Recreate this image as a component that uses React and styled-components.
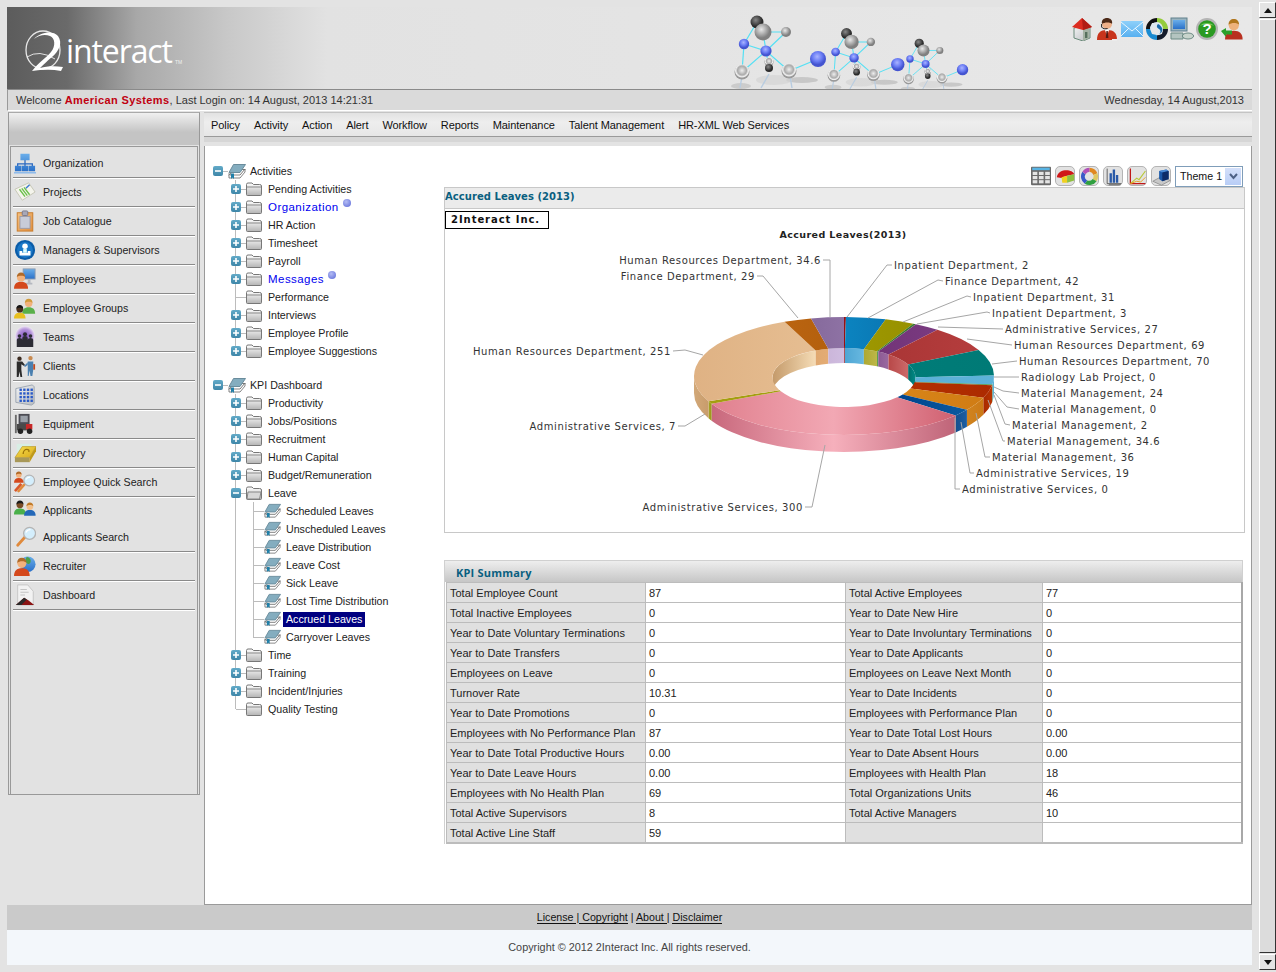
import React from 'react';
import styled, { createGlobalStyle, css } from 'styled-components';

const GlobalStyle = createGlobalStyle`
  html, body {
    margin: 0;
    padding: 0;
    height: 972px;
    overflow: hidden;
    background: #e3e3e3;
    font-family: "Liberation Sans", Arial, sans-serif;
    font-size: 11px;
    color: #222;
  }
`;

/* ---------- data ---------- */

const MENU = ['Policy', 'Activity', 'Action', 'Alert', 'Workflow', 'Reports', 'Maintenance', 'Talent Management', 'HR-XML Web Services'];

const KPI = [
  ['Total Employee Count', '87', 'Total Active Employees', '77'],
  ['Total Inactive Employees', '0', 'Year to Date New Hire', '0'],
  ['Year to Date Voluntary Terminations', '0', 'Year to Date Involuntary Terminations', '0'],
  ['Year to Date Transfers', '0', 'Year to Date Applicants', '0'],
  ['Employees on Leave', '0', 'Employees on Leave Next Month', '0'],
  ['Turnover Rate', '10.31', 'Year to Date Incidents', '0'],
  ['Year to Date Promotions', '0', 'Employees with Performance Plan', '0'],
  ['Employees with No Performance Plan', '87', 'Year to Date Total Lost Hours', '0.00'],
  ['Year to Date Total Productive Hours', '0.00', 'Year to Date Absent Hours', '0.00'],
  ['Year to Date Leave Hours', '0.00', 'Employees with Health Plan', '18'],
  ['Employees with No Health Plan', '69', 'Total Organizations Units', '46'],
  ['Total Active Supervisors', '8', 'Total Active Managers', '10'],
  ['Total Active Line Staff', '59', '', ''],
];

const ACTIVITIES = [
  { label: 'Pending Activities', plus: true },
  { label: 'Organization', plus: true, alert: true },
  { label: 'HR Action', plus: true },
  { label: 'Timesheet', plus: true },
  { label: 'Payroll', plus: true },
  { label: 'Messages', plus: true, alert: true },
  { label: 'Performance' },
  { label: 'Interviews', plus: true },
  { label: 'Employee Profile', plus: true },
  { label: 'Employee Suggestions', plus: true },
];

const KPI_TREE = [
  { label: 'Productivity', plus: true },
  { label: 'Jobs/Positions', plus: true },
  { label: 'Recruitment', plus: true },
  { label: 'Human Capital', plus: true },
  { label: 'Budget/Remuneration', plus: true },
  {
    label: 'Leave',
    open: true,
    leaves: ['Scheduled Leaves', 'Unscheduled Leaves', 'Leave Distribution', 'Leave Cost', 'Sick Leave', 'Lost Time Distribution', 'Accrued Leaves', 'Carryover Leaves'],
  },
  { label: 'Time', plus: true },
  { label: 'Training', plus: true },
  { label: 'Incident/Injuries', plus: true },
  { label: 'Quality Testing' },
];

// angles follow directly from the values, clockwise from the top
const SLICES = [
  { value: 2, top: ['#8c0c0c', '#a01010'], wall: ['#b04040', '#b04040'] },
  { value: 42, top: ['#0a78b4', '#0b84c0'], wall: ['#4ea6d4', '#68b8e0'] },
  { value: 31, top: ['#979100', '#9d9700'], wall: ['#aea832', '#bdb748'] },
  { value: 3, top: ['#3c7a30', '#3c7a30'], wall: ['#5a9a50', '#5a9a50'] },
  { value: 27, top: ['#7a3a80', '#723478'], wall: ['#8c5a94', '#9a6aa0'] },
  { value: 69, top: ['#b53d3d', '#aa3636'], wall: ['#b84848', '#cc6a6a'] },
  { value: 70, top: ['#007a76', '#007c78'], wall: ['#006e6a', '#008a86'] },
  { value: 24, top: ['#5cb2d8', '#5cb0d6'], wall: ['#5cb2d8', '#5cb2d8'] },
  { value: 2, top: ['#3c8a30', '#3c8a30'], wall: ['#3c8a30', '#3c8a30'] },
  { value: 34.6, top: ['#ac2a00', '#b23000'], wall: ['#b83400', '#a82a00'] },
  { value: 36, top: ['#d07c14', '#d88418'], wall: ['#cc7a16', '#d08420'] },
  { value: 19, top: ['#0a5aa0', '#00448c'], wall: ['#1c5ea2', '#14508e'] },
  { value: 300, top: ['#d06070', '#f2a8b4', '#e0808e'], wall: ['#bf6478', '#f6b0bc', '#c8687c'] },
  { value: 7, top: ['#a49e10', '#a49e10'], wall: ['#9a9618', '#a8a428'] },
  { value: 251, top: ['#e6be92', '#dfb284'], wall: ['#c89c6c', '#d2a878'], inner: ['#c49a6a', '#f5dcb6'] },
  { value: 29, top: ['#b4600e', '#ba6410'], wall: ['#e0a870', '#e4ac74'] },
  { value: 34.6, top: ['#8e72a4', '#866a9c'], wall: ['#cbb6da', '#d0bde0'] },
];

const LABELS = [
  { text: 'Inpatient Department, 2', x: 894, y: 265, line: '892,265 887,265 847,317' },
  { text: 'Finance Department, 42', x: 945, y: 281, line: '943,281 938,280 868,318' },
  { text: 'Inpatient Department, 31', x: 973, y: 297, line: '971,297 967,296 903,322' },
  { text: 'Inpatient Department, 3', x: 992, y: 313, line: '990,313 987,312 917,324' },
  { text: 'Administrative Services, 27', x: 1005, y: 329, line: '1003,329 938,327' },
  { text: 'Human Resources Department, 69', x: 1014, y: 345, line: '1012,345 967,339' },
  { text: 'Human Resources Department, 70', x: 1019, y: 361, line: '1017,361 992,364' },
  { text: 'Radiology Lab Project, 0', x: 1021, y: 377, line: '1019,377 994,377' },
  { text: 'Material Management, 24', x: 1021, y: 393, line: '1019,393 1003,391 994,387' },
  { text: 'Material Management, 0', x: 1021, y: 409, line: '1019,409 1007,407 994,392' },
  { text: 'Material Management, 2', x: 1012, y: 425, line: '1010,425 1005,424 994,395' },
  { text: 'Material Management, 34.6', x: 1007, y: 441, line: '1005,441 1003,441 988,400' },
  { text: 'Material Management, 36', x: 992, y: 457, line: '990,457 985,457 976,413' },
  { text: 'Administrative Services, 19', x: 976, y: 473, line: '974,473 970,473 961,422' },
  { text: 'Administrative Services, 0', x: 962, y: 489, line: '960,489 955,489 955,418' },
  { text: 'Human Resources Department, 34.6', x: 821, y: 260, end: true, line: '823,260 830,260 830,317' },
  { text: 'Finance Department, 29', x: 755, y: 276, end: true, line: '757,276 763,276 798,318' },
  { text: 'Human Resources Department, 251', x: 671, y: 351, end: true, line: '673,351 685,350 703,355' },
  { text: 'Administrative Services, 7', x: 676, y: 426, end: true, line: '678,426 685,426 705,414' },
  { text: 'Administrative Services, 300', x: 803, y: 507, end: true, line: '805,507 812,507 825,445' },
];

/* ---------- small drawings ---------- */

const Person = ({ x = 0, y = 0, s = 1, skin = '#f2b27c', shirt = '#d4481c', hair = '#b06a28' }) => (
  <g transform={`translate(${x} ${y}) scale(${s})`}>
    <path d="M0 22c0-6 3-9 9-9s9 3 9 9z" fill={shirt} />
    <circle cx="9" cy="7.5" r="5.2" fill={skin} />
    <path d="M3.6 7c0-4 2.4-6 5.4-6s5.4 2 5.4 6c-2-2.4-8-2.4-10.8 0z" fill={hair} />
  </g>
);

const Lens = ({ x = 0, y = 0, s = 1 }) => (
  <g transform={`translate(${x} ${y}) scale(${s})`}>
    <path d="M9 11L1 20" stroke="#e08a3c" strokeWidth="3" strokeLinecap="round" />
    <circle cx="14" cy="7" r="6.5" fill="#d4eefc" stroke="#b4b4b4" strokeWidth="1.4" />
    <path d="M10 6c1-2 3-3 5-3" stroke="#fff" strokeWidth="1.4" fill="none" />
  </g>
);

const Glyph = styled.svg`
  display: block;
  flex: none;
  width: ${(p) => p.$size || 22}px;
  height: ${(p) => p.$size || 22}px;
`;

const Icon = ({ size, children }) => (
  <Glyph $size={size} viewBox="0 0 24 24">
    {children}
  </Glyph>
);

const OrgIcon = () => (
  <Icon>
    <path d="M12 8v5M4 16v-3h16v3M12 13v3" stroke="#2a68c0" strokeWidth="1.4" fill="none" />
    <path d="M7 2h10v7H7zM1 15h7v6H1zM8.5 15h7v6h-7zM16 15h7v6h-7z" fill="url(#gBlue)" />
    <path d="M0 22h24v1.4H0z" fill="#7fb4ec" />
  </Icon>
);
const ProjectIcon = () => (
  <Icon>
    <path d="M1 9l15-7 7 10-14 9z" fill="#f4f4ec" stroke="#c4c4b4" />
    <path d="M6 9l6 8M8.5 8l6 8M11 7l6 8" stroke="#6cc04a" strokeWidth="1.5" />
    <path d="M13 8l4-4" stroke="#3a7ad0" strokeWidth="1.5" />
  </Icon>
);
const CatalogueIcon = () => (
  <Icon>
    <rect x="3.5" y="3" width="17" height="20" fill="url(#gOrange)" stroke="#c87a28" />
    <rect x="6.5" y="7" width="11" height="13" fill="#c8ccd8" stroke="#9a9aa8" />
    <rect x="9" y="1" width="6" height="5" rx="1" fill="#a8a8b8" stroke="#78788a" />
  </Icon>
);
const ManagerIcon = () => (
  <Icon>
    <circle cx="12" cy="12" r="11" fill="#0a5ca8" />
    <circle cx="12" cy="12" r="8.6" fill="#1a78c8" />
    <circle cx="12" cy="8" r="3" fill="#fff" />
    <path d="M6 13v5h12v-5h-3v2H9v-2z" fill="#fff" />
    <path d="M10 11h4v4h-4z" fill="#dff" />
  </Icon>
);
const EmployeeIcon = () => (
  <Icon>
    <rect x="10" y="1" width="13" height="11" fill="url(#gBlue)" stroke="#8a9ab0" />
    <path d="M15 12h3v4h2v2h-7v-2h2z" fill="#b4b8c0" />
    <Person x={0} y={4} s={0.85} />
  </Icon>
);
const GroupIcon = () => (
  <Icon>
    <Person x={9} y={1} s={0.78} skin="#f2b27c" shirt="#5ab04a" hair="#d09a3a" />
    <Person x={0} y={8} s={0.7} skin="#4a3020" shirt="#e8c020" hair="#151515" />
  </Icon>
);
const TeamIcon = () => (
  <Icon>
    <circle cx="12" cy="11" r="11" fill="url(#gHalo)" />
    <g fill="#2c2c34">
      <circle cx="6" cy="11" r="2" />
      <circle cx="12" cy="9" r="2.2" />
      <circle cx="18" cy="11" r="2" />
      <path d="M3 23v-8q0-2 3-2t3 2v8zM9 23V13q0-2 3-2t3 2v10zM15 23v-8q0-2 3-2t3 2v8z" />
    </g>
  </Icon>
);
const ClientIcon = () => (
  <Icon>
    <circle cx="6" cy="4" r="2.4" fill="#3c2c22" />
    <path d="M3 7h6l3 4-1 1-3-2v6l1 8H7l-1-6-1 6H3z" fill="#2c2c2c" />
    <circle cx="18" cy="3.4" r="2.4" fill="#c88a50" />
    <path d="M15 7h6v9l-1 7h-2l-1-6-1 6h-1z" fill="#4a80b0" />
    <path d="M15 8l-4 4 1 1 3-2z" fill="#4a80b0" />
    <path d="M21 10h2v6h-2z" fill="#c04a20" />
  </Icon>
);
const LocationIcon = () => (
  <Icon>
    <path d="M2 5l18-4 2 2v18l-3 2-17-3z" fill="url(#gGrey)" stroke="#9aa4b0" />
    <g fill="#2a5ac8">
      {[5, 9, 13, 17].map((y) => [6, 10, 14, 18].map((x) => <rect key={`${x}-${y}`} x={x} y={y} width="2.6" height="2.6" />))}
    </g>
  </Icon>
);
const EquipmentIcon = () => (
  <Icon>
    <path d="M5 1h12v12H5z" fill="#4c4c54" />
    <path d="M7 3h8v7H7z" fill="#9aa0a8" />
    <path d="M3 12h15v7H3z" fill="#4a4a4a" />
    <path d="M13 12h7v6h-7z" fill="#c82828" />
    <path d="M1 2h2v20H1z" fill="#6a6a6a" />
    <circle cx="7" cy="20" r="3" fill="#222" />
    <circle cx="17" cy="20" r="3" fill="#222" />
  </Icon>
);
const DirectoryIcon = () => (
  <Icon>
    <path d="M3 2h16v10H3z" fill="#d8eee4" />
    <path d="M1 17l8-12h15l-7 12z" fill="url(#gGold)" stroke="#b08a10" strokeWidth=".6" />
    <path d="M1 17h16v5H1z" fill="#a89858" />
    <path d="M17 17l7-12v5l-7 12z" fill="#c09a18" />
    <path d="M10 13c0-3 2-5 4-5s3 1 2 3" stroke="#9a7208" fill="none" strokeWidth="1.4" />
  </Icon>
);
const QuickSearchIcon = () => (
  <Icon>
    <Lens x={4} y={4} s={0.9} />
    <Person x={0} y={0} s={0.58} />
    <path d="M1 22l7-8" stroke="#d8582a" strokeWidth="3" />
  </Icon>
);
const ApplicantIcon = () => (
  <Icon>
    <Person x={0} y={1} s={0.72} skin="#7a4c28" shirt="#4ab04a" hair="#1a1a1a" />
    <Person x={11} y={3} s={0.7} skin="#f2c08c" shirt="#2468b8" hair="#c07a28" />
  </Icon>
);
const SearchIcon = () => (
  <Icon>
    <Lens x={3} y={1} s={1} />
  </Icon>
);
const RecruiterIcon = () => (
  <Icon>
    <circle cx="15" cy="10" r="8.5" fill="url(#gBlue)" />
    <path d="M14 2c3 1 5 3 4 6s-4 2-5 0 0-4 1-6z" fill="#4aa04a" />
    <Person x={0} y={2} s={0.95} />
  </Icon>
);
const DashboardIcon = () => (
  <Icon>
    <path d="M4 1h11l6 7v15H4z" fill="#f2f2f2" stroke="#c4c4c4" />
    <path d="M7 6h7M7 9h9M7 12h5" stroke="#c0c0c0" />
    <path d="M2 23l9-8 5 3 6 5z" fill="#8a1414" />
    <path d="M2 23l9-8 3 2-6 6z" fill="#2a2a2a" />
  </Icon>
);

const HouseIcon = () => (
  <Icon size={24}>
    <path d="M4 11l9-2 7 1v11l-7 3-9-3z" fill="url(#gGrey)" stroke="#6a8a7a" />
    <path d="M13 11h6v10l-6 3z" fill="#a4b2a4" />
    <path d="M15 15h2.4v6H15z" fill="#56705e" />
    <path d="M12 1L2 10l11 3 9-3z" fill="#dc2c20" />
    <path d="M12 1l10 9-9 3z" fill="#b01c14" />
  </Icon>
);
const OperatorIcon = () => (
  <Icon size={24}>
    <path d="M2 23c0-7 3-10 10-10s10 3 10 10z" fill="#c8341c" />
    <path d="M10 13l2 6 2-6z" fill="#fff" />
    <path d="M11.4 14h1.4l.6 7h-2.6z" fill="#551a12" />
    <circle cx="12" cy="7" r="5" fill="#eeb088" />
    <path d="M7 7c-1-4 2-6 5-6s6 2 5 6c-1-2-8-2-10 0z" fill="#4c2a18" />
    <path d="M6.6 7v3c1 2 4 2 6 1.5" stroke="#222" fill="none" strokeWidth="1" />
    <path d="M17 22h5v1.5h-5z" fill="#eee" />
  </Icon>
);
const MailIcon = () => (
  <Icon size={24}>
    <rect x="1" y="4" width="22" height="16" rx="1" fill="url(#gMail)" />
    <path d="M1 5l11 9 11-9M1 19l8-8M23 19l-8-8" stroke="#e8f6ff" fill="none" strokeWidth="1" />
  </Icon>
);
const SyncIcon = () => (
  <Icon size={24}>
    <path d="M12 1a11 11 0 0 1 11 11h-5l-3-5-3-1z" fill="#94cc3c" />
    <path d="M12 1A11 11 0 0 0 1 12h4l2-6 5 0z" fill="#111" />
    <path d="M1 12a11 11 0 0 0 11 11v-5l-5-1-2-5z" fill="#1a8ad0" />
    <path d="M23 12a11 11 0 0 1-11 11v-5l5-1 1-5z" fill="#141c2c" />
    <path d="M12 5c-4 0-7 3-7 7 2-2 5-3 7-1s1 5-1 7c4 1 7-2 7-6s-3-7-6-7z" fill="#dfe8ee" />
    <path d="M13 7c-2 2-1 4 1 5s2 4 0 5c3-1 4-4 3-6s-2-3-4-4z" fill="#1a6aa8" />
  </Icon>
);
const ComputerIcon = () => (
  <Icon size={24}>
    <rect x="1" y="1" width="16" height="13" fill="#9ab4c0" stroke="#60808c" />
    <rect x="3" y="3" width="12" height="9" fill="url(#gBlue)" />
    <path d="M1 16h12v6H1z" fill="#b4c4c0" stroke="#6c8a84" />
    <ellipse cx="18" cy="19" rx="5.6" ry="3" fill="#c8d4cc" stroke="#6c8a84" />
  </Icon>
);
const HelpIcon = () => (
  <Icon size={24}>
    <circle cx="12" cy="12" r="11" fill="#b4b4b4" />
    <circle cx="12" cy="12" r="8.8" fill="#2a9a22" />
    <path d="M5 9a7.6 5 0 0 1 14 0c-4-2-10-2-14 0z" fill="#72c85c" />
    <text x="12" y="17" fontFamily="Liberation Sans" fontWeight="700" fontSize="15" fill="#fff" textAnchor="middle">?</text>
  </Icon>
);
const UserArrowIcon = () => (
  <Icon size={24}>
    <Person x={5} y={1} s={0.98} skin="#eeb27c" shirt="#b83020" hair="#b0761e" />
    <path d="M1 14l5-3v2.400h6v4H6V20z" fill="#2aa02a" />
  </Icon>
);

const TableIcon = () => (
  <Icon size={20}>
    <rect x="0" y="1" width="24" height="22" fill="#6a6a6a" rx="1" />
    <rect x="1.500" y="2" width="21" height="3" fill="#58b4e4" />
    {[7, 12, 17].map((y) => [2, 9.500, 17].map((x) => <rect key={`${x}-${y}`} x={x} y={y} width="5.600" height="3.800" fill="#e4e4e4" />))}
  </Icon>
);
const PieButtonIcon = () => (
  <Icon size={19}>
    <path d="M1 13c1-7 7-9 12-9 5 0 9 2 10 5l-9 2-6 2-1 1z" fill="#d01818" />
    <path d="M7 13l7-2v9H8z" fill="#f0d020" />
    <path d="M14 11l9-2v8l-9 3z" fill="#90c040" />
  </Icon>
);
const RingIcon = () => (
  <Icon size={19}>
    <path d="M12 1a11 11 0 0 1 10 7l-5 2a6 6 0 0 0-5-4z" fill="#e08820" />
    <path d="M22 8a11 11 0 0 1-1 10l-5-3a6 6 0 0 0 1-5z" fill="#e0c860" />
    <path d="M21 18a11 11 0 0 1-15 3l3-4a6 6 0 0 0 7-2z" fill="#30a040" />
    <path d="M6 21A11 11 0 0 1 3 6l4 3a6 6 0 0 0 2 8z" fill="#3858c8" />
    <path d="M3 6a11 11 0 0 1 9-5v5a6 6 0 0 0-5 3z" fill="#b050b8" />
  </Icon>
);
const BarsIcon = () => (
  <Icon size={19}>
    <path d="M4 2v19h18" stroke="#444" fill="none" />
    <path d="M7 8h3v12H7zM11 3h3v17h-3zM15 10h3v10h-3z" fill="#2a5aa8" />
    <path d="M6 22h15v1H6z" fill="#444" />
  </Icon>
);
const LinesIcon = () => (
  <Icon size={19}>
    <path d="M3 2v19h19" stroke="#c01818" strokeWidth="1.6" fill="none" />
    <path d="M3 21l8-7 3 2 8-11" stroke="#b8c838" strokeWidth="1.400" fill="none" />
    <path d="M3 21l8-3 5 1 6-6" stroke="#e8a020" strokeWidth="1.200" fill="none" />
  </Icon>
);
const BoxIcon = () => (
  <Icon size={19}>
    <path d="M1 18l11-6 11 5-11 6z" fill="#c8c8c8" stroke="#8a8a8a" />
    <path d="M9 5l9-2 3 2v10l-8 3-4-3z" fill="#1a58a8" />
    <path d="M9 5l9-2 3 2-8 2z" fill="#4a8ad4" />
    <path d="M13 7l8-2v10l-8 3z" fill="#0c2c68" />
  </Icon>
);

const SIDE_ITEMS = [
  ['Organization', OrgIcon], ['Projects', ProjectIcon], ['Job Catalogue', CatalogueIcon],
  ['Managers & Supervisors', ManagerIcon], ['Employees', EmployeeIcon], ['Employee Groups', GroupIcon],
  ['Teams', TeamIcon], ['Clients', ClientIcon], ['Locations', LocationIcon], ['Equipment', EquipmentIcon],
  ['Directory', DirectoryIcon], ['Employee Quick Search', QuickSearchIcon], ['Applicants', ApplicantIcon, true],
  ['Applicants Search', SearchIcon], ['Recruiter', RecruiterIcon], ['Dashboard', DashboardIcon],
];

const Defs = styled.svg`
  position: absolute;
  width: 0;
  height: 0;
`;

const SharedGradients = () => (
  <Defs aria-hidden="true">
    <defs>
      <linearGradient id="gBlue" x1="0" y1="0" x2="0" y2="1"><stop offset="0" stopColor="#6aaeea" /><stop offset="1" stopColor="#2a70c8" /></linearGradient>
      <linearGradient id="gGrey" x1="0" y1="0" x2="1" y2="1"><stop offset="0" stopColor="#f4f4f4" /><stop offset="1" stopColor="#b8bcc0" /></linearGradient>
      <linearGradient id="gOrange" x1="0" y1="0" x2="1" y2="1"><stop offset="0" stopColor="#f4c080" /><stop offset="1" stopColor="#e09040" /></linearGradient>
      <linearGradient id="gGold" x1="0" y1="0" x2="1" y2="1"><stop offset="0" stopColor="#f8e050" /><stop offset="1" stopColor="#d8a818" /></linearGradient>
      <linearGradient id="gMail" x1="0" y1="0" x2="0" y2="1"><stop offset="0" stopColor="#8ed0fa" /><stop offset="1" stopColor="#58b0f0" /></linearGradient>
      <linearGradient id="gFolder" x1="0" y1="0" x2="0" y2="1"><stop offset="0" stopColor="#fff" /><stop offset="1" stopColor="#b4b4b4" /></linearGradient>
      <radialGradient id="gHalo"><stop offset="0" stopColor="#7a4ac0" /><stop offset=".7" stopColor="#b898dc" /><stop offset="1" stopColor="#eee6f4" /></radialGradient>
      <radialGradient id="gBallGrey" cx=".4" cy=".35"><stop offset="0" stopColor="#e8e8e8" /><stop offset=".6" stopColor="#aaa" /><stop offset="1" stopColor="#808080" /></radialGradient>
      <radialGradient id="gBallWhite" cx=".5" cy=".4"><stop offset="0" stopColor="#eee" /><stop offset=".6" stopColor="#aaa" /><stop offset=".85" stopColor="#f4f4f4" /><stop offset="1" stopColor="#999" /></radialGradient>
      <radialGradient id="gBallBlue" cx=".45" cy=".35"><stop offset="0" stopColor="#aab4ff" /><stop offset=".6" stopColor="#6a7cf4" /><stop offset="1" stopColor="#4454d0" /></radialGradient>
      <radialGradient id="gBallDark" cx=".4" cy=".35"><stop offset="0" stopColor="#888" /><stop offset="1" stopColor="#2a2a2a" /></radialGradient>
    </defs>
  </Defs>
);

const FolderGlyph = ({ open }) => (
  <svg width="16" height="14" viewBox="0 0 16 14">
    <path d="M.5 2.500q0-1.500 1.500-1.500h4l1.500 1.500h6q2 0 2 1.500v8.500q0 1-1 1H1.500q-1 0-1-1z" fill="url(#gFolder)" stroke="#777" />
    <path d={open ? 'M2 6h13l-1.500 7H1z' : 'M1 5h14'} stroke="#888" fill={open ? '#d8d8d8' : 'none'} />
  </svg>
);

const BookGlyph = ({ size = 17 }) => (
  <svg width={size} height={size - 1} viewBox="0 0 18 16">
    <path d="M1 12L6 6h11l-5 6z" fill="#fff" stroke="#777" />
    <path d="M5.500 1h12L12 9H1z" fill="#84adbf" stroke="#6a8c9c" />
    <path d="M1 10v4.500h11l5-6V5.500l-5 6H2z" fill="#fff" stroke="#666" strokeWidth=".8" />
    <path d="M3 10v5.500L4.500 14 6 15.500V10z" fill="#1f7fa8" />
  </svg>
);

const Box = styled.span`
  display: flex;
  align-items: center;
  justify-content: center;
  flex: none;
  width: 10px;
  height: 10px;
  border-radius: 2px;
  background: linear-gradient(#62aac8, #3e86a8);
  color: #fff;
`;

const Expander = ({ open }) => (
  <Box>
    <svg width="8" height="8" viewBox="0 0 8 8">
      <path d={open ? 'M1 4h6' : 'M1 4h6M4 1v6'} stroke="#fff" strokeWidth="1.600" />
    </svg>
  </Box>
);

const Ball = ({ x, y, r, kind }) => <circle cx={x} cy={y} r={r} fill={`url(#gBall${kind})`} />;

const Molecule = ({ x, y, s }) => (
  <g transform={`translate(${x} ${y}) scale(${s})`}>
    <ellipse cx="-3" cy="42" rx="10" ry="3" fill="#bbb" opacity=".6" />
    <ellipse cx="58" cy="36" rx="16" ry="3" fill="#bbb" opacity=".7" />
    <ellipse cx="30" cy="36" rx="18" ry="5" fill="#d4d4d4" opacity=".7" />
    <path d="M-2 32l-2 12M25 30l-8 14M46 32l2 12" stroke="#b8cce0" strokeWidth="1.400" fill="none" />
    <path d="M13 -22L19 -12L42 -12L22 7L0 0L13 -22M19 -12L22 7L45 27L74 15M22 7L-2 28L0 0M22 7L25 23" stroke="#55e0f4" strokeWidth="1.200" fill="none" />
    <Ball x={25} y={18} r={4.500} kind="White" />
    <Ball x={25} y={24} r={4} kind="Dark" />
    <Ball x={13} y={-22} r={6.500} kind="Dark" />
    <Ball x={19} y={-12} r={8.500} kind="Grey" />
    <Ball x={42} y={-12} r={5} kind="Grey" />
    <Ball x={0} y={0} r={5.200} kind="Blue" />
    <Ball x={22} y={7} r={5.600} kind="Blue" />
    <Ball x={74} y={15} r={8} kind="Blue" />
    <Ball x={-2} y={28} r={7.500} kind="White" />
    <Ball x={45} y={27} r={7.500} kind="White" />
  </g>
);

const Molecules = () => (
  <MoleculeArt viewBox="725 7 260 82">
    <Molecule x={744} y={44} s={1} />
    <Molecule x={835.6} y={52} s={0.84} />
    <Molecule x={910} y={59} s={0.71} />
  </MoleculeArt>
);

/* ---------- donut chart ---------- */

const CX = 844;
const CY = 376;
const RX = 150;
const RY = 59;
const IRX = 71.5;
const IRY = 29.5;
const ICY = 377.5;
const DEPTH = 17;
const IDEPTH = 15;
const TOTAL = 981.2;

const rad = (a) => (a * Math.PI) / 180;
const outer = (a, d = 0) => `${(CX + RX * Math.sin(rad(a))).toFixed(2)} ${(CY - RY * Math.cos(rad(a)) + d).toFixed(2)}`;
const inner = (a, d = 0) => `${(CX + IRX * Math.sin(rad(a))).toFixed(2)} ${(ICY - IRY * Math.cos(rad(a)) + d).toFixed(2)}`;

const topFace = (a0, a1) => {
  const big = a1 - a0 > 180 ? 1 : 0;
  return `M${outer(a0)}A${RX} ${RY} 0 ${big} 1 ${outer(a1)}L${inner(a1)}A${IRX} ${IRY} 0 ${big} 0 ${inner(a0)}Z`;
};
const outerWall = (a0, a1) => {
  const from = Math.max(a0, 90);
  const to = Math.min(a1, 270);
  if (to <= from) return null;
  const big = to - from > 180 ? 1 : 0;
  return `M${outer(from)}A${RX} ${RY} 0 ${big} 1 ${outer(to)}L${outer(to, DEPTH)}A${RX} ${RY} 0 ${big} 0 ${outer(from, DEPTH)}Z`;
};
const innerWall = (from, to) => {
  if (to <= from) return null;
  return `M${inner(from)}A${IRX} ${IRY} 0 0 1 ${inner(to)}L${inner(to, IDEPTH)}A${IRX} ${IRY} 0 0 0 ${inner(from, IDEPTH)}Z`;
};

const Stops = ({ colors }) =>
  colors.map((c, i) => <stop key={i} offset={colors.length > 1 ? i / (colors.length - 1) : 0} stopColor={c} />);

const DonutChart = () => {
  let angle = 0;
  const arcs = SLICES.map((s, i) => {
    const a0 = angle;
    angle += (s.value / TOTAL) * 360;
    return { ...s, i, a0, a1: angle };
  });

  return (
    <ChartSvg viewBox="445 209 800 323">
      <defs>
        {arcs.map((s) => (
          <React.Fragment key={s.i}>
            <linearGradient id={`top${s.i}`} x1="1" y1="0" x2="0" y2="0"><Stops colors={s.top} /></linearGradient>
            <linearGradient id={`wall${s.i}`} x1="1" y1="0" x2="0" y2="0"><Stops colors={s.wall} /></linearGradient>
            <linearGradient id={`inner${s.i}`} x1="0" y1="0" x2="1" y2="0"><Stops colors={s.inner || s.wall} /></linearGradient>
          </React.Fragment>
        ))}
      </defs>

      <ChartTitle x="843" y="238" textAnchor="middle">Accured Leaves(2013)</ChartTitle>

      {arcs.map((s) => (
        <g key={s.i}>
          {innerWall(s.a0, Math.min(s.a1, 90)) && <path d={innerWall(s.a0, Math.min(s.a1, 90))} fill={`url(#inner${s.i})`} />}
          {innerWall(Math.max(s.a0, 270), s.a1) && <path d={innerWall(Math.max(s.a0, 270), s.a1)} fill={`url(#inner${s.i})`} />}
        </g>
      ))}
      {arcs.map((s) => outerWall(s.a0, s.a1) && <path key={s.i} d={outerWall(s.a0, s.a1)} fill={`url(#wall${s.i})`} />)}
      {arcs.map((s) => <path key={s.i} d={topFace(s.a0, s.a1)} fill={`url(#top${s.i})`} />)}

      {LABELS.map((l) => (
        <g key={l.text}>
          <polyline points={l.line} fill="none" stroke="#a6a6a6" />
          <ChartLabel x={l.x} y={l.y + 3.500} textAnchor={l.end ? 'end' : 'start'}>{l.text}</ChartLabel>
        </g>
      ))}
    </ChartSvg>
  );
};

/* ---------- page ---------- */

const App = () => (
  <>
    <GlobalStyle />
    <SharedGradients />
    <Viewport>
      <Page>
        <Header>
          <Logo>
            <LogoMark viewBox="0 0 40 42">
              <ellipse cx="18" cy="20" rx="17" ry="19" fill="none" stroke="#fff" strokeWidth="1.300" opacity=".85" />
              <path d="M9 9C15 2 28 0 33 6C38 13 34 21 27 27C21 32 17 36 15 38C22 36 30 36 38 37L36 41C26 39 16 40 7 41C13 33 21 28 26 22C31 16 30 8 25 6C20 4 14 5 9 9Z" fill="#fff" />
              <path d="M2 27q12-8 28 2" fill="none" stroke="#fff" strokeWidth="1" opacity=".8" />
            </LogoMark>
            <LogoText>interact</LogoText>
            <LogoTm>TM</LogoTm>
          </Logo>
          <Molecules />
          <HeaderIcons>
            <HouseIcon /><OperatorIcon /><MailIcon /><SyncIcon /><ComputerIcon /><HelpIcon /><UserArrowIcon />
          </HeaderIcons>
        </Header>

        <WelcomeBar>
          <span>Welcome <Company>American Systems</Company>, Last Login on: 14 August, 2013 14:21:31</span>
          <span>Wednesday, 14 August,2013</span>
        </WelcomeBar>

        <Columns>
          <Sidebar>
            <SideHead />
            <SideList>
              {SIDE_ITEMS.map(([label, ItemIcon, noLine]) => (
                <SideItem key={label} $noLine={noLine}>
                  <ItemIcon />
                  <span>{label}</span>
                </SideItem>
              ))}
            </SideList>
          </Sidebar>

          <Workspace>
            <MenuBar>
              {MENU.map((m) => <MenuItem key={m}>{m}</MenuItem>)}
            </MenuBar>
            <MenuShade />
            <Main>
              <Tree>
                <TreeRow $level={0}>
                  <Expander open /><Stub />
                  <IconSlot><BookGlyph size={18} /></IconSlot>
                  <TreeLabel>Activities</TreeLabel>
                </TreeRow>
                <Branch items={ACTIVITIES} />
                <TreeRow $level={0} $gap>
                  <Expander open /><Stub />
                  <IconSlot><BookGlyph size={18} /></IconSlot>
                  <TreeLabel>KPI Dashboard</TreeLabel>
                </TreeRow>
                <Branch items={KPI_TREE} />
              </Tree>

              <Content>
                <Toolbar>
                  <TableIcon />
                  <ToolButton><PieButtonIcon /></ToolButton>
                  <ToolButton><RingIcon /></ToolButton>
                  <ToolButton><BarsIcon /></ToolButton>
                  <ToolButton><LinesIcon /></ToolButton>
                  <ToolButton><BoxIcon /></ToolButton>
                  <ThemeSelect>
                    <span>Theme 1</span>
                    <ThemeArrow>
                      <svg width="9" height="7" viewBox="0 0 9 7"><path d="M1 1l3.500 4L8 1" fill="none" stroke="#4d6185" strokeWidth="2" /></svg>
                    </ThemeArrow>
                  </ThemeSelect>
                </Toolbar>

                <ChartPanel>
                  <PanelTitle>Accured Leaves (2013)</PanelTitle>
                  <ChartArea>
                    <CompanyTag>2Interact Inc.</CompanyTag>
                    <DonutChart />
                  </ChartArea>
                </ChartPanel>

                <KpiBox>
                  <KpiHead>KPI Summary</KpiHead>
                  <KpiTable>
                    <colgroup>
                      <KpiCol $w={199} /><KpiCol $w={200} /><KpiCol $w={197} /><KpiCol $w={199} />
                    </colgroup>
                    <tbody>
                      {KPI.map((row) => (
                        <tr key={row[0]}>
                          {row.map((cell, i) => (
                            i % 2 === 0 ? <KpiName key={i}>{cell}</KpiName> : <KpiValue key={i}>{cell}</KpiValue>
                          ))}
                        </tr>
                      ))}
                    </tbody>
                  </KpiTable>
                </KpiBox>
              </Content>
            </Main>
          </Workspace>
        </Columns>

        <FooterLinks>
          <FooterLink>License </FooterLink>|<FooterLink> Copyright</FooterLink> | <FooterLink>About </FooterLink>| <FooterLink>Disclaimer</FooterLink>
        </FooterLinks>
        <FooterNote>Copyright © 2012 2Interact Inc. All rights reserved.</FooterNote>
      </Page>

      <Scrollbar>
        <ScrollButton>
          <svg width="8" height="5" viewBox="0 0 8 5"><path d="M4 0l4 5H0z" fill="#111" /></svg>
        </ScrollButton>
        <ScrollThumb />
        <ScrollButton>
          <svg width="8" height="5" viewBox="0 0 8 5"><path d="M4 5L0 0h8z" fill="#111" /></svg>
        </ScrollButton>
      </Scrollbar>
    </Viewport>
  </>
);

const Branch = ({ items }) =>
  items.map((item, index) => {
    const last = index === items.length - 1;
    return (
      <React.Fragment key={item.label}>
        <TreeRow $level={1} $last={last}>
          {item.plus || item.open ? (
            <>
              <Expander open={item.open} /><Stub />
            </>
          ) : (
            <LongStub />
          )}
          <IconSlot><FolderGlyph open={item.open} /></IconSlot>
          {item.alert ? <AlertLabel>{item.label}</AlertLabel> : <TreeLabel>{item.label}</TreeLabel>}
          {item.alert && <AlertDot />}
        </TreeRow>
        {item.leaves &&
          item.leaves.map((leaf, i) => (
            <TreeRow key={leaf} $level={2} $last={i === item.leaves.length - 1}>
              <LeafStub />
              <IconSlot><BookGlyph /></IconSlot>
              <TreeLabel $selected={leaf === 'Accrued Leaves'}>{leaf}</TreeLabel>
            </TreeRow>
          ))}
      </React.Fragment>
    );
  });

/* ---------- styles ---------- */

const Viewport = styled.div`
  display: flex;
  width: 1276px;
  height: 972px;
`;

const Page = styled.div`
  width: 1245px;
  margin: 7px 0 0 7px;
  display: flex;
  flex-direction: column;
`;

const Header = styled.header`
  display: flex;
  height: 82px;
  background: linear-gradient(90deg, #5c5c5c 0, #6a6a6a 60px, #a8a8a8 130px, #c8c8c8 220px, #e2e2e2 320px, #e8e8e8 100%);
`;

const Logo = styled.div`
  display: flex;
  align-items: flex-start;
  width: 718px;
  padding: 23px 0 0 18px;
  box-sizing: border-box;
  color: #fff;
`;

const LogoMark = styled.svg`
  width: 40px;
  height: 42px;
  flex: none;
`;

const LogoText = styled.span`
  font-family: "Open Sans", sans-serif;
  font-weight: 400;
  font-size: 32px;
  line-height: 36px;
  letter-spacing: -1.1px;
  margin: 3px 0 0 1px;
`;

const LogoTm = styled.span`
  font-size: 5px;
  margin: 29px 0 0 3px;
  opacity: .8;
`;

const MoleculeArt = styled.svg`
  width: 260px;
  height: 82px;
  flex: none;
`;

const HeaderIcons = styled.div`
  display: flex;
  gap: 1px;
  margin: 10px 8px 0 auto;
  height: 24px;
`;

const WelcomeBar = styled.div`
  display: flex;
  justify-content: space-between;
  align-items: center;
  height: 22px;
  box-sizing: border-box;
  padding: 0 8px 0 8px;
  background: #dadada;
  border-top: 1px solid #8a8a8a;
  border-left: 1px solid #9a9a9a;
  border-bottom: 1px solid #fff;
  color: #333;
`;

const Company = styled.b`
  color: #c00010;
  letter-spacing: .4px;
`;

const Columns = styled.div`
  display: flex;
  height: 793px;
  margin-top: 1px;
`;

const Sidebar = styled.aside`
  width: 192px;
  height: 683px;
  margin: 0 4px 0 1px;
  box-sizing: border-box;
  border: 1px solid #999;
  border-top-color: #aaa;
  flex: none;
  display: flex;
  flex-direction: column;
`;

const SideHead = styled.div`
  height: 32px;
  background: linear-gradient(#f0f0f0, #c4c4c4 60%);
  flex: none;
`;

const SideList = styled.nav`
  flex: 1;
  margin: 1px 1px 0;
  padding: 2px 2px 0;
  border: 1px solid #999;
  border-bottom: 0;
  background: #e2e2e2;
`;

const SideItem = styled.div`
  display: flex;
  align-items: center;
  gap: 7px;
  box-sizing: border-box;
  height: ${(p) => (p.$noLine ? 26 : 29)}px;
  padding-left: 1px;
  font-size: 10.67px;
  ${(p) =>
    !p.$noLine &&
    css`
      border-bottom: 1px solid #8a8a8a;
      box-shadow: 0 1px 0 #fff;
    `}
`;

const Workspace = styled.div`
  flex: 1;
  display: flex;
  flex-direction: column;
  min-width: 0;
`;

const MenuBar = styled.nav`
  display: flex;
  align-items: center;
  height: 25px;
  box-sizing: border-box;
  border-top: 1px solid #c4c4c4;
  border-bottom: 1px solid #9a9a9a;
  background: linear-gradient(#e2e2e2, #eeeeee 40%, #e6e6e6);
`;

const MenuItem = styled.span`
  padding: 0 7px;
  color: #111;
  letter-spacing: -.08px;
`;

const MenuShade = styled.div`
  height: 5px;
  margin-bottom: 4px;
  background: #d6d6d6;
`;

const Main = styled.main`
  display: flex;
  flex: 1;
  min-height: 0;
  background: #fff;
  border-left: 1px solid #9a9a9a;
  border-right: 1px solid #9a9a9a;
  border-bottom: 1px solid #9a9a9a;
`;

const Tree = styled.div`
  width: 239px;
  flex: none;
  padding-top: 16px;
`;

const guideLine = (x, half) => `linear-gradient(#bcbcbc, #bcbcbc) ${x}px 0 / 1px ${half ? '50%' : '100%'} no-repeat`;

const TreeRow = styled.div`
  display: flex;
  align-items: center;
  height: 18px;
  padding-left: ${(p) => [8, 26, 48][p.$level]}px;
  margin-top: ${(p) => (p.$gap ? 16 : 0)}px;
  background: ${(p) => {
    if (p.$level === 1) return guideLine(30, p.$last);
    if (p.$level === 2) return `${guideLine(30)}, ${guideLine(48, p.$last)}`;
    return 'none';
  }};
`;

const Stub = styled.span`
  flex: none;
  width: 5px;
  height: 1px;
  background: #bcbcbc;
`;

const LongStub = styled(Stub)`
  width: 10px;
  margin-left: 5px;
`;

const LeafStub = styled(Stub)`
  width: 11px;
`;

const IconSlot = styled.span`
  display: flex;
  flex: none;
  width: 19px;
`;

const TreeLabel = styled.span`
  padding: 0 3px;
  font-size: 10.67px;
  line-height: 15px;
  white-space: nowrap;
  color: ${(p) => (p.$selected ? '#fff' : '#222')};
  background: ${(p) => (p.$selected ? '#000080' : 'none')};
`;

const AlertLabel = styled(TreeLabel)`
  color: #0000f0;
  font-size: 11.5px;
  letter-spacing: .45px;
  padding-top: 1px;
`;

const AlertDot = styled.span`
  width: 8px;
  height: 8px;
  margin: -8px 0 0 1px;
  border-radius: 50%;
  background: radial-gradient(circle at 40% 35%, #b4bcf4, #5a68d8);
`;

const Content = styled.div`
  flex: 1;
  min-width: 0;
  padding-top: 19px;
  padding-right: 6px;
`;

const Toolbar = styled.div`
  display: flex;
  align-items: center;
  justify-content: flex-end;
  gap: 4px;
  height: 22px;
  padding-right: 2px;
`;

const ToolButton = styled.span`
  display: flex;
  align-items: center;
  justify-content: center;
  width: 20px;
  height: 20px;
  box-sizing: border-box;
  border: 1px solid #b4b4b4;
  border-radius: 5px;
  background: #e2e2e2;
`;

const ThemeSelect = styled.div`
  display: flex;
  align-items: stretch;
  justify-content: space-between;
  width: 68px;
  height: 21px;
  box-sizing: border-box;
  padding: 1px;
  border: 1px solid #7f9db9;
  font-size: 10.67px;
  line-height: 17px;
  background: #fff;
  color: #111;

  span:first-child {
    padding-left: 3px;
  }
`;

const ThemeArrow = styled.span`
  display: flex;
  align-items: center;
  justify-content: center;
  width: 16px;
  background: linear-gradient(#d4e0fa, #b8cdf6);
`;

const ChartPanel = styled.section`
  border: 1px solid #c8c8c8;
`;

const PanelTitle = styled.div`
  height: 21px;
  box-sizing: border-box;
  background: #ebebeb;
  border-bottom: 1px solid #c8c8c8;
  font-family: "DejaVu Sans", Verdana, sans-serif;
  font-weight: 700;
  font-size: 10px;
  line-height: 18px;
  letter-spacing: .05px;
  color: #0a5f80;
`;

const ChartArea = styled.div`
  position: relative;
  height: 323px;
`;

const CompanyTag = styled.div`
  position: absolute;
  left: 0;
  top: 2px;
  width: 104px;
  height: 18px;
  box-sizing: border-box;
  border: 1px solid #000;
  background: #fff;
  color: #111;
  font-family: "DejaVu Sans", Verdana, sans-serif;
  font-weight: 700;
  font-size: 10px;
  line-height: 16px;
  letter-spacing: .95px;
  padding-left: 5px;
  white-space: nowrap;
`;

const ChartSvg = styled.svg`
  display: block;
  width: 800px;
  height: 323px;
`;

const ChartTitle = styled.text`
  font-family: "DejaVu Sans", Verdana, sans-serif;
  font-weight: 700;
  font-size: 9.500px;
  letter-spacing: .4px;
  fill: #222;
`;

const ChartLabel = styled.text`
  font-family: "DejaVu Sans", Verdana, sans-serif;
  font-size: 10px;
  letter-spacing: .6px;
  fill: #333;
`;

const KpiBox = styled.section`
  width: 799px;
  margin-top: 27px;
  border: 1px solid #d0d0d0;
  border-bottom: 0;
  box-sizing: border-box;
`;

const KpiHead = styled.div`
  height: 21px;
  box-sizing: border-box;
  padding: 1px 0 0 11px;
  background: linear-gradient(#eeeeee, #c6c6c6);
  font-family: "Open Sans", sans-serif;
  font-weight: 700;
  font-size: 11px;
  line-height: 22px;
  letter-spacing: .2px;
  color: #0a5f80;
`;

const KpiTable = styled.table`
  width: 795px;
  margin-left: 1px;
  table-layout: fixed;
  border-collapse: collapse;
  font-size: 11px;
  border-bottom: 2px solid #bcbcbc;
  border-right: 2px solid #a8a8a8;
`;

const KpiCol = styled.col`
  width: ${(p) => p.$w}px;
`;

const KpiName = styled.td`
  height: 19px;
  padding: 0 3px;
  border: 1px solid #bcbcbc;
  background: #e0e0e0;
  white-space: nowrap;
  overflow: hidden;
`;

const KpiValue = styled(KpiName)`
  background: #fff;
`;

const FooterLinks = styled.div`
  height: 25px;
  box-sizing: border-box;
  padding-top: 6px;
  background: #cacaca;
  text-align: center;
  color: #111;
  font-size: 10.67px;
`;

const FooterLink = styled.span`
  border-bottom: 1px solid #111;
`;

const FooterNote = styled.div`
  height: 35px;
  line-height: 34px;
  background: #f3f7fb;
  text-align: center;
  font-size: 10.85px;
  color: #444;
`;

const Scrollbar = styled.div`
  width: 17px;
  margin: 2px 0 0 7px;
  display: flex;
  flex-direction: column;
  gap: 1px;
  height: 968px;
`;

const ScrollButton = styled.div`
  display: flex;
  align-items: center;
  justify-content: center;
  height: 16px;
  flex: none;
  background: #e4e4e4;
  border: 1px solid;
  border-color: #fff #333 #333 #fff;
  box-sizing: border-box;
`;

const ScrollThumb = styled.div`
  flex: 1;
  background: #dcdcdc;
  border: 1px solid;
  border-color: #fff #333 #333 #fff;
`;

export default App;
